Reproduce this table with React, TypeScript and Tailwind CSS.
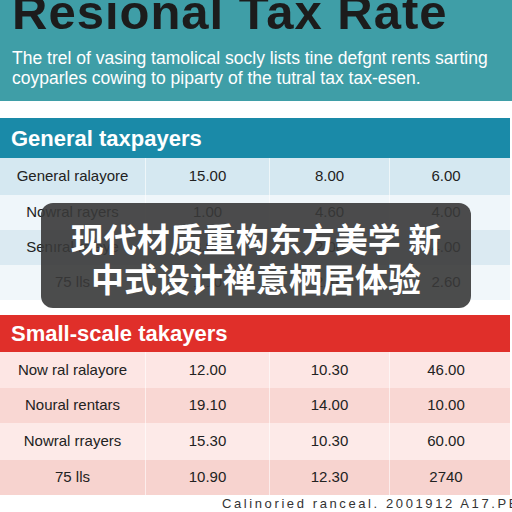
import React from 'react'

const blueRows = [
  { label: 'General ralayore', a: '15.00', b: '8.00', c: '6.00', bg: 'bg-[#d5e8f1]', h: 'h-[37px]' },
  { label: 'Nowral rayers', a: '1.00', b: '4.60', c: '4.00', bg: 'bg-[#eff6fa]', h: 'h-[35px]' },
  { label: 'Senıral raleye', a: '3.00', b: '2.00', c: '4.00', bg: 'bg-[#dbeaf2]', h: 'h-[35px]' },
  { label: '75 lls', a: '1.10', b: '2.10', c: '2.60', bg: 'bg-[#f1f7fa]', h: 'h-[35px]' },
]

const redRows = [
  { label: 'Now ral ralayore', a: '12.00', b: '10.30', c: '46.00', bg: 'bg-[#fde6e4]', h: 'h-[36px]' },
  { label: 'Noural rentars', a: '19.10', b: '14.00', c: '10.00', bg: 'bg-[#f9d7d3]', h: 'h-[35px]' },
  { label: 'Nowral rrayers', a: '15.30', b: '10.30', c: '60.00', bg: 'bg-[#fdeae8]', h: 'h-[37px]' },
  { label: '75 lls', a: '10.90', b: '12.30', c: '2740', bg: 'bg-[#f7d3cf]', h: 'h-[35px]' },
]

type Row = { label: string; a: string; b: string; c: string; bg: string; h: string }

const TableRow = ({ row }: { row: Row }) => (
  <div className={`grid grid-cols-[146px_124px_120px_120px] items-center text-[15px] text-[#222] ${row.bg} ${row.h}`}>
    <div className="border-r border-white/60 h-full flex items-center justify-center">{row.label}</div>
    <div className="border-r border-white/60 h-full flex items-center justify-center">{row.a}</div>
    <div className="border-r border-white/60 h-full flex items-center justify-center">{row.b}</div>
    <div className="h-full flex items-center justify-center pr-2">{row.c}</div>
  </div>
)

export default function App() {
  return (
    <div className="relative w-[512px] h-[512px] overflow-hidden bg-white font-['Liberation_Sans',Arial,sans-serif]">
      {/* Title band */}
      <div className="h-[101px] bg-[#3f9ea7] pl-[12px] overflow-hidden">
        <h1 className="text-[49px] leading-none font-bold text-[#1c1c1c] tracking-[1px] -mt-[12px] whitespace-nowrap">
          Resional Tax Rate
        </h1>
        <p className="mt-[11px] text-[17.5px] leading-[20px] text-white whitespace-nowrap">
          The trel of vasing tamolical socly lists tine defgnt rents sarting
          <br />
          coyparles cowing to piparty of the tutral tax tax-esen.
        </p>
      </div>

      <div className="h-[17px]" />

      {/* General taxpayers */}
      <div className="w-[510px]">
        <div className="h-[40px] bg-[#1a8aa8] flex items-center pl-[11px] text-white font-bold text-[22px]">
          General taxpayers
        </div>
        {blueRows.map((r, i) => (
          <TableRow key={i} row={r} />
        ))}
      </div>

      <div className="h-[15px]" />

      {/* Small-scale */}
      <div className="w-[510px]">
        <div className="h-[37px] bg-[#e02f2a] flex items-center pl-[11px] text-white font-bold text-[22px]">
          Small-scale takayers
        </div>
        {redRows.map((r, i) => (
          <TableRow key={i} row={r} />
        ))}
      </div>

      <div className="pl-[222px] text-[13px] leading-[17px] tracking-[2.6px] text-[#333] whitespace-nowrap">
        Calinoried ranceal. 2001912 A17.PE
      </div>

      {/* Overlay caption */}
      <div className="absolute left-[41px] top-[203px] w-[430px] h-[105px] rounded-[12px] bg-[#383838]/90 flex flex-col items-center justify-center pt-[5px]">
        <p className="text-white font-bold text-[33px] leading-[40px] text-center font-['Noto_Sans_CJK_SC',sans-serif] whitespace-nowrap">
          现代材质重构东方美学 新
          <br />
          中式设计禅意栖居体验
        </p>
      </div>
    </div>
  )
}
